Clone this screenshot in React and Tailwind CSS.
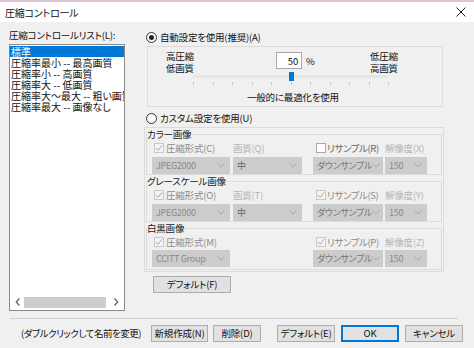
import React from "react";

const listItems = [
  "標準",
  "圧縮率最小 -- 最高画質",
  "圧縮率小 -- 高画質",
  "圧縮率大 -- 低画質",
  "圧縮率大〜最大 -- 粗い画質",
  "圧縮率最大 -- 画像なし",
];

const Chevron = () => (
  <svg width="8" height="5" viewBox="0 0 8 5" className="shrink-0">
    <polyline points="0.5,0.5 4,4 7.5,0.5" fill="none" stroke="#a9a9a9" strokeWidth="1" />
  </svg>
);

const Select = ({ w, value, color }) => (
  <div className={`${w} h-[17px] bg-[#cccccc] flex items-center justify-between pl-[4px] pr-[5px] overflow-hidden`}>
    <span className={`${color} text-[9px] whitespace-nowrap tracking-[-0.3px]`}>{value}</span>
    <Chevron />
  </div>
);

const Check = ({ checked }) => (
  <span
    className={`w-[10px] h-[10px] border flex items-center justify-center shrink-0 ${
      checked ? "border-[#c8c8c8] bg-[#f4f4f4]" : "border-[#a8a8a8] bg-white"
    }`}
  >
    {checked && (
      <svg width="8" height="8" viewBox="0 0 8 8">
        <polyline points="0.8,4 3,6.4 7.2,1.2" fill="none" stroke="#aaaaaa" strokeWidth="1" />
      </svg>
    )}
  </span>
);

const Radio = ({ checked }) => (
  <span className="w-[11px] h-[11px] rounded-full border border-[#333333] bg-white flex items-center justify-center shrink-0">
    {checked && <span className="w-[5px] h-[5px] rounded-full bg-[#222222]" />}
  </span>
);

const Group = ({ title, c1, q, r, rChecked, x, first, quality, pb, selTop }) => (
  <fieldset className={`mx-[1px] border border-[#dcdcdc] px-0 ${pb}`}>
    <legend className="px-0 ml-0 leading-[12px] text-[#1a1a1a]">{title}</legend>
    <div className="pl-[5px]">
      <div className="mt-[2px] flex h-[12px] items-center leading-[12px] whitespace-nowrap">
        <div className="w-[81px] flex items-center gap-[2px] pl-[2px]">
          <Check checked />
          <span className="text-[#8a8a8a]">{c1}</span>
        </div>
        <div className="w-[80px] text-[#b4b4b4]">{q}</div>
        <div className="w-[72px] flex items-center gap-[1px] pl-[3px] tracking-[-0.4px]">
          <Check checked={rChecked} />
          <span className={rChecked ? "text-[#8a8a8a]" : "text-[#666666]"}>{r}</span>
        </div>
        <div className="text-[#b4b4b4]">{x}</div>
      </div>
      <div className={`${selTop} flex`}>
        <Select w="w-[78px]" value={first} color="text-[#8a8a8a]" />
        {quality ? (
          <div className="ml-[3px]">
            <Select w="w-[69px]" value="中" color="text-[#666666]" />
          </div>
        ) : (
          <div className="w-[72px]" />
        )}
        <div className="ml-[11px]">
          <Select w="w-[70px]" value="ダウンサンプル" color="text-[#777777]" />
        </div>
        <div className="ml-[2px]">
          <Select w="w-[42px]" value="150" color="text-[#888888]" />
        </div>
      </div>
    </div>
  </fieldset>
);

const Button = ({ w, children, primary }) => (
  <div
    className={`${w} h-[17px] flex items-center justify-center whitespace-nowrap bg-[#e1e1e1] ${
      primary ? "border-2 border-[#0078d7]" : "border border-[#adadad]"
    }`}
  >
    {children}
  </div>
);

export default function App() {
  return (
    <div className="w-[474px] h-[348px] bg-[#f0f0f0] flex flex-col overflow-hidden text-[9.5px] tracking-[-0.2px] text-[#111111] font-['Noto_Sans_CJK_JP','Noto_Sans',sans-serif] [font-feature-settings:'palt']">
      {/* title bar */}
      <div className="h-[22px] bg-white border-t-2 border-[#dcc3d6] flex items-center justify-between pl-[5px] pr-[8px]">
        <span className="text-[10px]">圧縮コントロール</span>
        <svg width="10" height="10" viewBox="0 0 10 10">
          <path d="M0.5 0.5 L9.5 9.5 M9.5 0.5 L0.5 9.5" stroke="#222222" strokeWidth="1" />
        </svg>
      </div>

      <div className="h-[296px] flex">
        {/* left: list */}
        <div className="ml-[9px] w-[116px] pt-[7px]">
          <div className="h-[12px] leading-[12px] whitespace-nowrap">圧縮コントロールリスト(L):</div>
          <div className="mt-[3px] h-[267px] border border-[#8a8a8a] bg-white flex flex-col">
            <div className="flex-1 pt-[1px] overflow-hidden text-[10px] tracking-normal">
              {listItems.map((item, i) => (
                <div
                  key={i}
                  className={`h-[11px] leading-[11px] whitespace-nowrap pl-[1px] ${
                    i === 0 ? "bg-[#0078d7] text-white" : ""
                  }`}
                >
                  {item}
                </div>
              ))}
            </div>
            <div className="h-[16px] flex items-center px-[5px] gap-[3px]">
              <svg width="6" height="8" viewBox="0 0 6 8">
                <polyline points="4.5,0.5 1.2,4 4.5,7.5" fill="none" stroke="#606060" strokeWidth="1.2" />
              </svg>
              <div className="w-[82px] h-[11px] bg-[#cdcdcd]" />
              <svg width="6" height="8" viewBox="0 0 6 8" className="ml-[4px]">
                <polyline points="1.5,0.5 4.8,4 1.5,7.5" fill="none" stroke="#606060" strokeWidth="1.2" />
              </svg>
            </div>
          </div>
        </div>

        {/* right: settings */}
        <div className="ml-[18px] w-[301px] pt-[9px]">
          <div className="h-[12px] flex items-center gap-[3px] ml-[3px] leading-[12px]">
            <Radio checked />
            <span>自動設定を使用(推奨)(A)</span>
          </div>

          <div className="mt-[3px] ml-[4px] w-[296px] h-[61px] border border-[#dcdcdc] pt-[3px]">
            <div className="flex pl-[18px] leading-[12px]">
              <div className="w-[110px]">
                <div>高圧縮</div>
                <div>低画質</div>
              </div>
              <div className="w-[26px] h-[17px] mt-[2px] bg-white border border-[#a8a8a8] flex items-center justify-end pr-[3px]">
                50
              </div>
              <div className="w-[68px] pl-[4px] mt-[5px]">%</div>
              <div>
                <div>低圧縮</div>
                <div>高画質</div>
              </div>
            </div>
            <div className="-mt-[2px] ml-[45px] w-[196px] h-[14px] relative">
              <div className="absolute left-0 right-0 top-[3px] h-[3px] bg-[#e6e6e6]" />
              <div className="absolute left-[96px] top-0 w-[5px] h-[9px] bg-[#0078d7]" />
              <div className="absolute left-0 right-0 bottom-[1px] flex justify-between">
                {Array.from({ length: 11 }).map((_, i) => (
                  <span key={i} className="w-px h-[3px] bg-[#c4c4c4]" />
                ))}
              </div>
            </div>
            <div className="mt-[5px] ml-[99px] leading-[12px]">一般的に最適化を使用</div>
          </div>

          <div className="mt-[5px] h-[12px] flex items-center gap-[3px] ml-[3px] leading-[12px]">
            <Radio />
            <span>カスタム設定を使用(U)</span>
          </div>

          <div className="mt-[3px] ml-[1px] w-[300px] h-[145px] border border-[#dcdcdc]">
            <Group
              title="カラー画像"
              c1="圧縮形式(C)"
              q="画質(Q)"
              r="リサンプル(R)"
              rChecked={false}
              x="解像度(X)"
              first="JPEG2000"
              quality
              pb="pb-0"
              selTop="mt-[3px]"
            />
            <Group
              title="グレースケール画像"
              c1="圧縮形式(O)"
              q="画質(T)"
              r="リサンプル(S)"
              rChecked
              x="解像度(Y)"
              first="JPEG2000"
              quality
              pb="pb-0"
              selTop="mt-[3px]"
            />
            <Group
              title="白黒画像"
              c1="圧縮形式(M)"
              q=""
              r="リサンプル(P)"
              rChecked
              x="解像度(Z)"
              first="CCITT Group"
              pb="pb-[2px]"
              selTop="mt-[2px]"
            />
          </div>

          <div className="mt-[4px] ml-[10px]">
            <Button w="w-[78px]">デフォルト(F)</Button>
          </div>
        </div>
      </div>

      {/* separator */}
      <div className="mx-[10px] w-[448px] h-px bg-[#cfcfcf]" />

      {/* bottom bar */}
      <div className="mt-[6px] flex items-center">
        <div className="ml-[21px] w-[130px] whitespace-nowrap tracking-[-0.5px]">(ダブルクリックして名前を変更)</div>
        <Button w="w-[57px]">新規作成(N)</Button>
        <div className="ml-[5px]">
          <Button w="w-[48px]">削除(D)</Button>
        </div>
        <div className="ml-[16px]">
          <Button w="w-[58px]">デフォルト(E)</Button>
        </div>
        <div className="ml-[6px]">
          <Button w="w-[58px]" primary>OK</Button>
        </div>
        <div className="ml-[6px]">
          <Button w="w-[58px]">キャンセル</Button>
        </div>
      </div>
    </div>
  );
}
